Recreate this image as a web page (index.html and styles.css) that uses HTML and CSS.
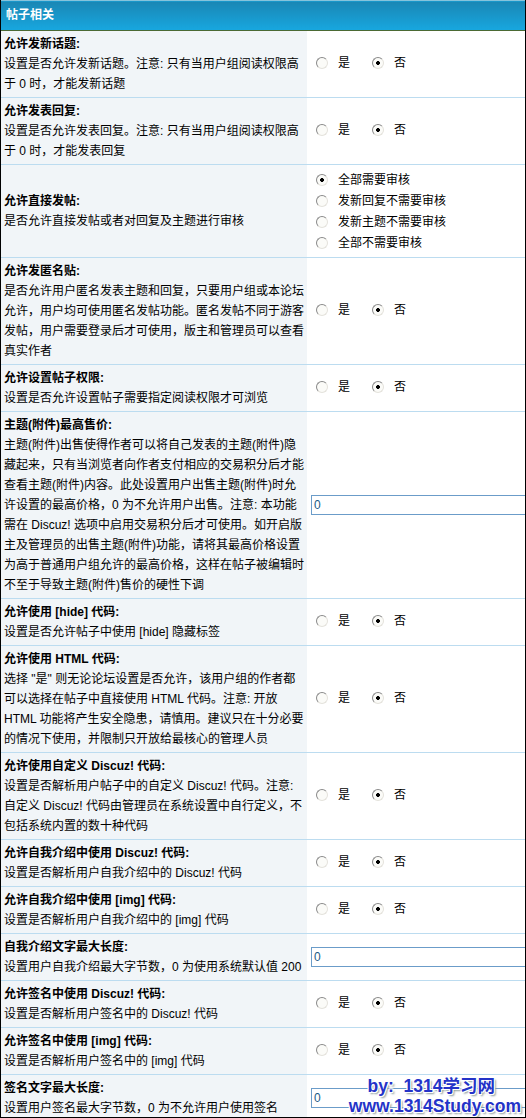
FILE: index.html
```html
<!DOCTYPE html>
<html lang="zh-CN">
<head>
    <meta charset="UTF-8">
    <title>帖子相关</title>
    <link rel="stylesheet" href="styles.css">
</head>
<body>

<div class="wrap">
<table class="tableborder">
    <colgroup><col class="col-label"><col class="col-value"></colgroup>
    <tr class="header"><td colspan="2">帖子相关</td></tr>

    <tr>
        <td class="altbg1"><b>允许发新话题:</b><br>设置是否允许发新话题。注意: 只有当用户组阅读权限高<br>于 0 时，才能发新话题</td>
        <td class="altbg2"><label class="opt"><input type="radio" name="allowpost">是</label><label class="opt"><input type="radio" name="allowpost" checked>否</label></td>
    </tr>
    <tr>
        <td class="altbg1"><b>允许发表回复:</b><br>设置是否允许发表回复。注意: 只有当用户组阅读权限高<br>于 0 时，才能发表回复</td>
        <td class="altbg2"><label class="opt"><input type="radio" name="allowreply">是</label><label class="opt"><input type="radio" name="allowreply" checked>否</label></td>
    </tr>
    <tr>
        <td class="altbg1"><b>允许直接发帖:</b><br>是否允许直接发帖或者对回复及主题进行审核</td>
        <td class="altbg2 list">
            <label class="opt"><input type="radio" name="allowdirectpost" checked>全部需要审核</label>
            <label class="opt"><input type="radio" name="allowdirectpost">发新回复不需要审核</label>
            <label class="opt"><input type="radio" name="allowdirectpost">发新主题不需要审核</label>
            <label class="opt"><input type="radio" name="allowdirectpost">全部不需要审核</label>
        </td>
    </tr>
    <tr>
        <td class="altbg1"><b>允许发匿名贴:</b><br>是否允许用户匿名发表主题和回复，只要用户组或本论坛<br>允许，用户均可使用匿名发帖功能。匿名发帖不同于游客<br>发帖，用户需要登录后才可使用，版主和管理员可以查看<br>真实作者</td>
        <td class="altbg2"><label class="opt"><input type="radio" name="allowanonymous">是</label><label class="opt"><input type="radio" name="allowanonymous" checked>否</label></td>
    </tr>
    <tr>
        <td class="altbg1"><b>允许设置帖子权限:</b><br>设置是否允许设置帖子需要指定阅读权限才可浏览</td>
        <td class="altbg2"><label class="opt"><input type="radio" name="allowsetreadperm">是</label><label class="opt"><input type="radio" name="allowsetreadperm" checked>否</label></td>
    </tr>
    <tr>
        <td class="altbg1"><b>主题(附件)最高售价:</b><br>主题(附件)出售使得作者可以将自己发表的主题(附件)隐<br>藏起来，只有当浏览者向作者支付相应的交易积分后才能<br>查看主题(附件)内容。此处设置用户出售主题(附件)时允<br>许设置的最高价格，0 为不允许用户出售。注意: 本功能<br>需在 Discuz! 选项中启用交易积分后才可使用。如开启版<br>主及管理员的出售主题(附件)功能，请将其最高价格设置<br>为高于普通用户组允许的最高价格，这样在帖子被编辑时<br>不至于导致主题(附件)售价的硬性下调</td>
        <td class="altbg2"><input type="text" class="txt" value="0"></td>
    </tr>
    <tr>
        <td class="altbg1"><b>允许使用 [hide] 代码:</b><br>设置是否允许帖子中使用 [hide] 隐藏标签</td>
        <td class="altbg2"><label class="opt"><input type="radio" name="allowhidecode">是</label><label class="opt"><input type="radio" name="allowhidecode" checked>否</label></td>
    </tr>
    <tr>
        <td class="altbg1"><b>允许使用 HTML 代码:</b><br>选择 "是" 则无论论坛设置是否允许，该用户组的作者都<br>可以选择在帖子中直接使用 HTML 代码。注意: 开放<br>HTML 功能将产生安全隐患，请慎用。建议只在十分必要<br>的情况下使用，并限制只开放给最核心的管理人员</td>
        <td class="altbg2"><label class="opt"><input type="radio" name="allowhtml">是</label><label class="opt"><input type="radio" name="allowhtml" checked>否</label></td>
    </tr>
    <tr>
        <td class="altbg1"><b>允许使用自定义 Discuz! 代码:</b><br>设置是否解析用户帖子中的自定义 Discuz! 代码。注意:<br>自定义 Discuz! 代码由管理员在系统设置中自行定义，不<br>包括系统内置的数十种代码</td>
        <td class="altbg2"><label class="opt"><input type="radio" name="allowcusbbcode">是</label><label class="opt"><input type="radio" name="allowcusbbcode" checked>否</label></td>
    </tr>
    <tr>
        <td class="altbg1"><b>允许自我介绍中使用 Discuz! 代码:</b><br>设置是否解析用户自我介绍中的 Discuz! 代码</td>
        <td class="altbg2"><label class="opt"><input type="radio" name="allowbiobbcode">是</label><label class="opt"><input type="radio" name="allowbiobbcode" checked>否</label></td>
    </tr>
    <tr>
        <td class="altbg1"><b>允许自我介绍中使用 [img] 代码:</b><br>设置是否解析用户自我介绍中的 [img] 代码</td>
        <td class="altbg2"><label class="opt"><input type="radio" name="allowbioimgcode">是</label><label class="opt"><input type="radio" name="allowbioimgcode" checked>否</label></td>
    </tr>
    <tr>
        <td class="altbg1"><b>自我介绍文字最大长度:</b><br>设置用户自我介绍最大字节数，0 为使用系统默认值 200</td>
        <td class="altbg2"><input type="text" class="txt" value="0"></td>
    </tr>
    <tr>
        <td class="altbg1"><b>允许签名中使用 Discuz! 代码:</b><br>设置是否解析用户签名中的 Discuz! 代码</td>
        <td class="altbg2"><label class="opt"><input type="radio" name="allowsigbbcode">是</label><label class="opt"><input type="radio" name="allowsigbbcode" checked>否</label></td>
    </tr>
    <tr>
        <td class="altbg1"><b>允许签名中使用 [img] 代码:</b><br>设置是否解析用户签名中的 [img] 代码</td>
        <td class="altbg2"><label class="opt"><input type="radio" name="allowsigimgcode">是</label><label class="opt"><input type="radio" name="allowsigimgcode" checked>否</label></td>
    </tr>
    <tr>
        <td class="altbg1"><b>签名文字最大长度:</b><br>设置用户签名最大字节数，0 为不允许用户使用签名</td>
        <td class="altbg2"><input type="text" class="txt" value="0"></td>
    </tr>
</table>

<div class="watermark">
    <div class="wm-by">by:&nbsp;&nbsp;1314学习网</div>
    <div class="wm-url">www.1314Study.com</div>
</div>
</div>

</body>
</html>
```

FILE: styles.css
```css
body {
    margin: 0;
    background-color: #fff;
    font: 12px "Liberation Sans", "Noto Sans CJK SC", sans-serif;
    color: #000;
}
.wrap {
    position: relative;
    width: 526px;
    height: 1118px;
    box-sizing: border-box;
    border: 1px solid #000;
    border-top: none;
    overflow: hidden;
}
.tableborder {
    width: 100%;
    table-layout: fixed;
    border-collapse: collapse;
}
.col-label {
    width: 306px;
}
.tableborder td {
    border-top: 1px solid #bcdcf0;
    line-height: 20px;
    vertical-align: middle;
    white-space: nowrap;
    overflow: hidden;
}
.header td {
    height: 29px;
    padding: 0 5px;
    border-top: 1px solid #86c3db;
    border-bottom: 1px solid #4b6a34;
    background: linear-gradient(#1a86b4, #17a7df);
    color: #fff;
    font-weight: bold;
    line-height: 29px;
}
.header + tr td {
    border-top: none;
}
.altbg1 {
    background-color: #f1f5f8;
    padding: 3px 3px;
}
.altbg2 {
    background-color: #fff;
    padding: 3px 0 3px 4px;
}
.list {
    padding-top: 4px;
    padding-bottom: 4px;
}
.list .opt {
    display: flex;
    height: 21px;
}
.opt {
    display: inline-flex;
    align-items: center;
    margin-right: 17px;
}
.opt input {
    appearance: none;
    width: 12px;
    height: 12px;
    margin: 0 10px 0 5px;
    border: 1px solid;
    border-color: #8a8a8a #e4e2dc #e4e2dc #8a8a8a;
    border-radius: 50%;
    background: #fbfbf8;
}
.opt input:checked {
    background: radial-gradient(circle, #000 0 1.6px, #fbfbf8 2.2px);
}
.txt {
    width: 240px;
    height: 20px;
    box-sizing: border-box;
    margin: 0;
    padding: 0 2px;
    border: 1px solid #6b9cc9;
    color: #1d5a86;
    font: 12px "Liberation Sans", sans-serif;
}
.watermark {
    position: absolute;
    right: 4px;
    bottom: 1px;
    color: #2433c8;
    font: bold 17.5px "Liberation Sans", "Noto Sans CJK SC", sans-serif;
    line-height: 20px;
    text-shadow: 1px 1px 0 #fff, -1px -1px 0 #fff, 1px -1px 0 #fff, -1px 1px 0 #fff, 2px 2px 2px #8a9a9a;
    text-align: right;
}
.wm-by {
    margin-right: 26px;
}
```
